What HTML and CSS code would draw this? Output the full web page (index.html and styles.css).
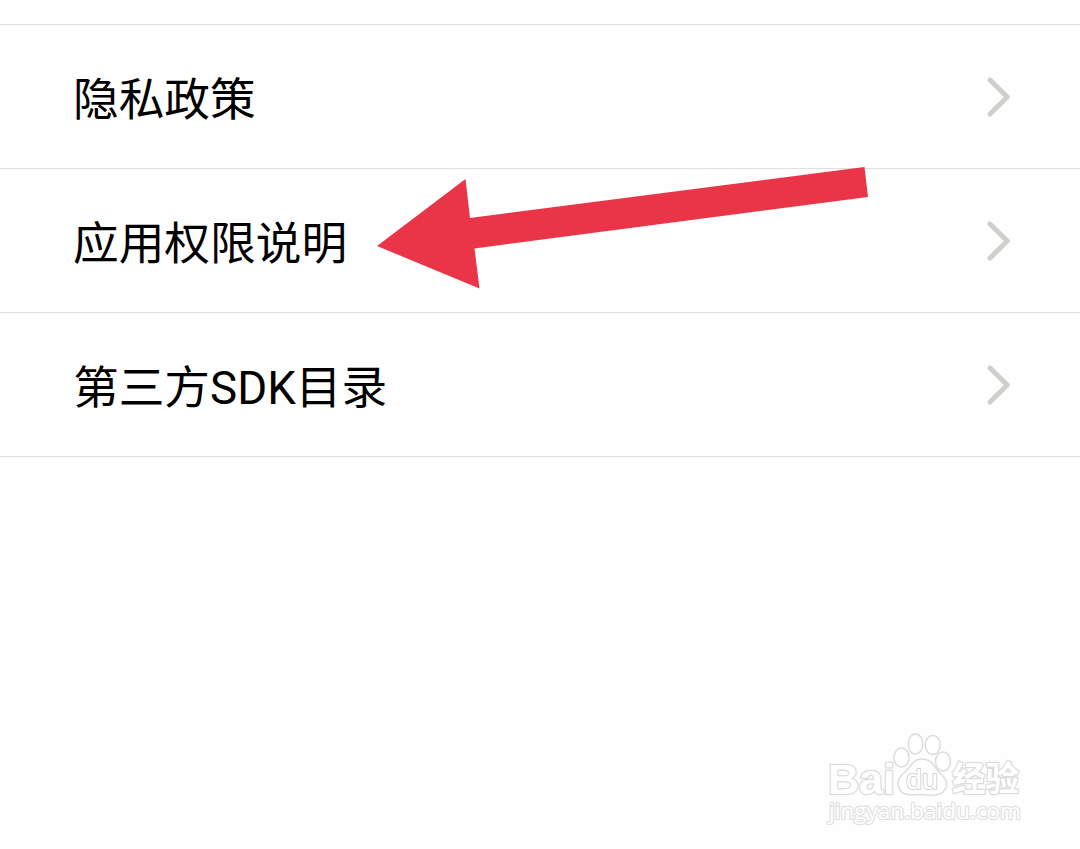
FILE: index.html
```html
<!DOCTYPE html>
<html lang="zh-CN">
<head>
<meta charset="utf-8">
<title>隐私</title>
<link rel="stylesheet" href="styles.css">
</head>
<body>
<main class="list">
  <div class="row"><span class="label">隐私政策</span><svg class="chevron" viewBox="0 0 30 44"><path d="M5 5L22.300 22L5 39"/></svg></div>
  <div class="row"><span class="label">应用权限说明</span><svg class="chevron" viewBox="0 0 30 44"><path d="M5 5L22.300 22L5 39"/></svg></div>
  <div class="row"><span class="label">第三方SDK目录</span><svg class="chevron" viewBox="0 0 30 44"><path d="M5 5L22.300 22L5 39"/></svg></div>
</main>
<svg class="arrow" viewBox="0 0 500 130"><path d="M7 86L95.500 19L100 58L494.500 7L498 37L104.500 88.500L109.500 128.500Z"/></svg>
<svg class="watermark" viewBox="0 0 210 110">
  <g class="outline">
    <text class="brand" x="8" y="68.500" textLength="67" lengthAdjust="spacingAndGlyphs">Bai</text>
    <ellipse cx="81.500" cy="32.500" rx="7.500" ry="9.500"/>
    <ellipse cx="95.500" cy="19" rx="7.200" ry="10"/>
    <ellipse cx="112.700" cy="20" rx="7.500" ry="9.500"/>
    <ellipse cx="123" cy="36.500" rx="7.500" ry="9.500"/>
    <path d="M102 34C93 34 91 42 84 48C78 53 77 58 79 63C82 71 90 70 102 69.500C114 71 122 71 126 63C128 55 124 52 119 47C113 40 111 34 102 34Z"/>
    <text class="du" x="86" y="64" textLength="32" lengthAdjust="spacingAndGlyphs">du</text>
    <text class="cn" x="132" y="66" textLength="67" lengthAdjust="spacingAndGlyphs">经验</text>
    <text class="site" x="9" y="94" textLength="192" lengthAdjust="spacingAndGlyphs">jingyan.baidu.com</text>
  </g>
</svg>
</body>
</html>
```
FILE: styles.css
```css
body {
  display: flow-root;
  position: relative;
  height: 849px;
  margin: 0;
  overflow: hidden;
  background: #fefefe;
  color: #000;
  font-family: Roboto, "Noto Sans CJK SC", sans-serif;
}
.list {
  margin-top: 24px;
  border-top: 1px solid #dfdfdf;
}
.row {
  display: flex;
  align-items: center;
  justify-content: space-between;
  box-sizing: border-box;
  height: 144px;
  padding: 0 65px 0 73px;
  border-bottom: 1px solid #dfdfdf;
}
.label {
  padding-top: 8px;
  font-size: 45.7px;
  line-height: 60px;
  white-space: nowrap;
}
.chevron {
  width: 30px;
  height: 44px;
  fill: none;
  stroke: #cfcfcb;
  stroke-width: 5;
  stroke-linecap: round;
  stroke-linejoin: round;
}
.arrow {
  position: absolute;
  left: 370px;
  top: 160px;
  width: 500px;
  height: 130px;
  fill: #ea3549;
}
.watermark {
  position: absolute;
  left: 820px;
  top: 725px;
  width: 210px;
  height: 110px;
}
.outline {
  fill: #fff;
  stroke: #dcdcdc;
  stroke-width: 1.5;
  stroke-linejoin: round;
}
.outline text { paint-order: stroke; stroke-width: 2.6; }
.brand { font: bold 43px "Liberation Sans", sans-serif; }
.outline .du { font: 28px "Liberation Sans", sans-serif; stroke-width: 2; stroke: #d4d4d4; }
.cn { font: bold 34px "Noto Sans CJK SC", sans-serif; }
.outline .site { font: 21px "Open Sans", sans-serif; stroke-width: 2.4; stroke: #e2e2e2; }
```
